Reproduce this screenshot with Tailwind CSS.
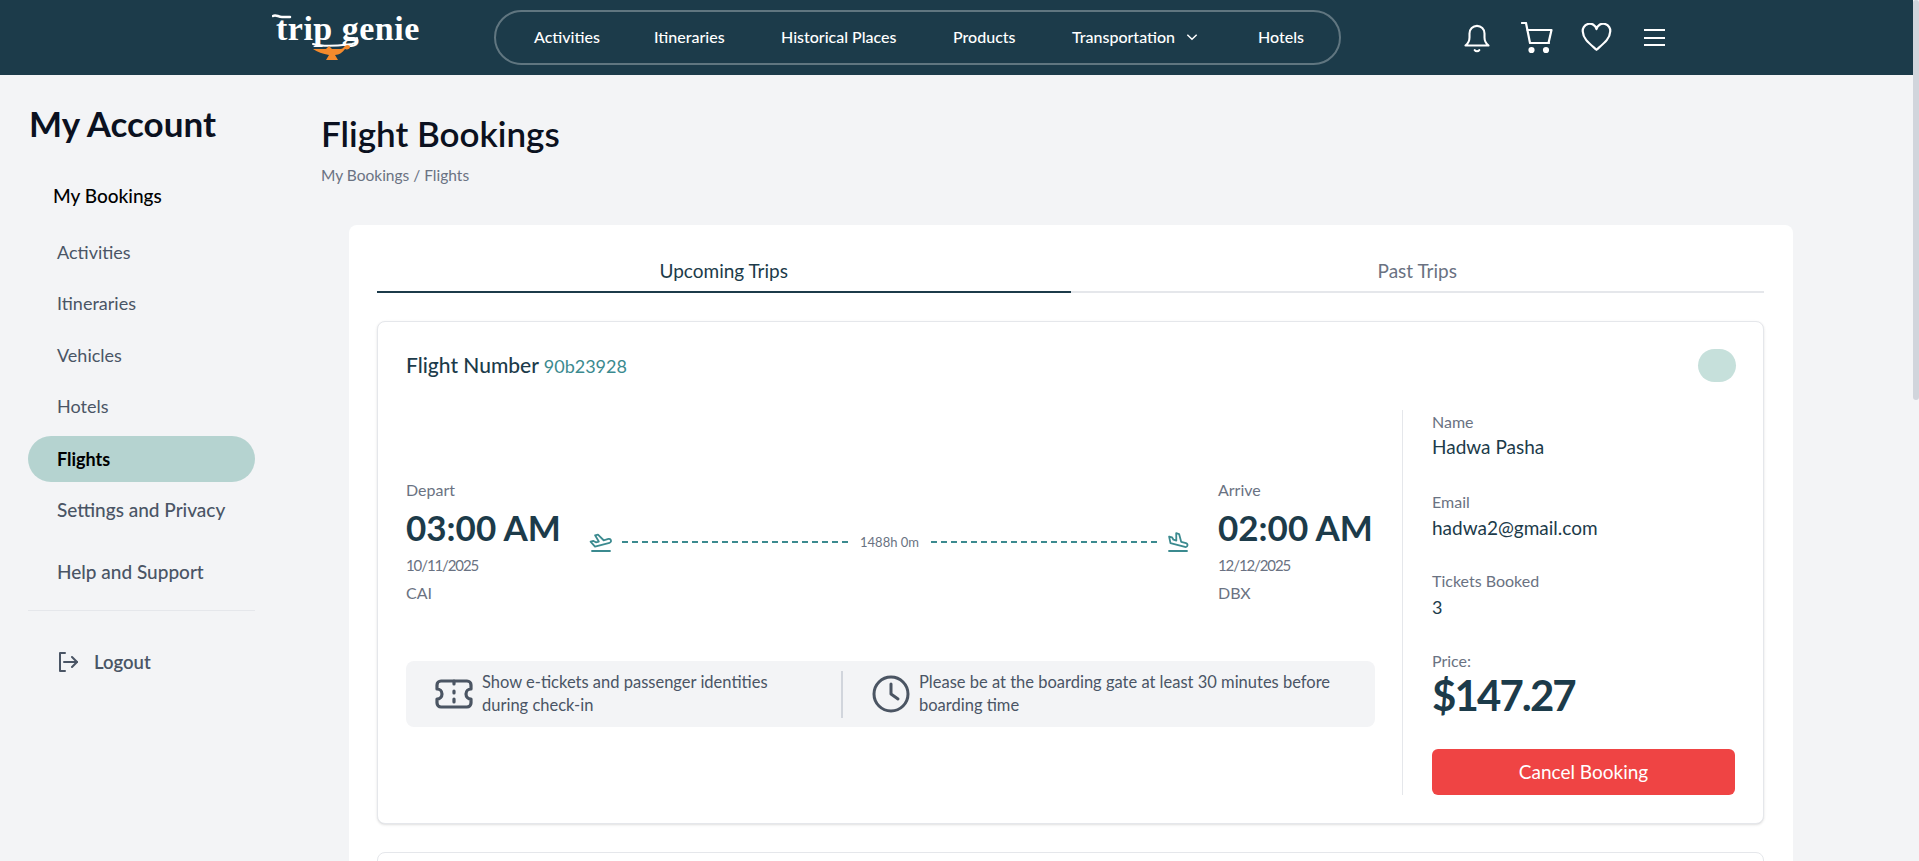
<!DOCTYPE html>
<html lang="en">
<head>
    <meta charset="UTF-8">
    <title>Flight Bookings</title>
    <script src="https://cdn.jsdelivr.net/npm/@tailwindcss/browser@4"></script>
</head>
<body>
    <div class="relative h-screen overflow-hidden bg-gray-100 font-['Lato',sans-serif] text-gray-600">
        <!-- navbar -->
        <header class="h-[75px] bg-[#1c3b4a] flex items-center text-white pr-[6px]">
            <div class="relative w-[222px] ml-[272px] h-[75px] shrink-0">
                <span class="absolute left-[4px] top-[9px] font-['Liberation_Serif',serif] font-bold text-[34px] leading-[40px] tracking-[0.5px] whitespace-nowrap">trip genie</span>
                <svg class="absolute left-0 top-[10px]" width="150" height="54" viewBox="0 0 150 54" fill="none">
                    <path d="M1 6c3-2 5 1 9 1h8" stroke="#fff" stroke-width="2.5" stroke-linecap="round"/>
                    <path d="M41 34c14 4 30 1 39 0c5-1 6-3 5-6" stroke="#fff" stroke-width="2" stroke-linecap="round"/>
                    <path d="M41 39h13l3-3l3 3h8c3 0 3-1 5-3c2-2 5-1 5 1c0 2-3 3-5 2c-2 3-6 6-10 6l3 5h-12l3-5c-6-1-12-3-16-6z" fill="#f58a2c"/>
                </svg>
            </div>
            <nav class="w-[847px] h-[55px] rounded-full border-2 border-white/30 flex items-center pl-[38px] pb-[2px] text-[16px] font-medium whitespace-nowrap">
                <a class="w-[120px]">Activities</a>
                <a class="w-[127px]">Itineraries</a>
                <a class="w-[172px]">Historical Places</a>
                <a class="w-[119px]">Products</a>
                <a class="w-[186px] flex items-center gap-[10px]">Transportation
                    <svg width="14" height="14" viewBox="0 0 24 24" fill="none" stroke="currentColor" stroke-width="2.5"><path d="M4 8l8 8l8-8"/></svg>
                </a>
                <a>Hotels</a>
            </nav>
            <div class="flex items-center ml-[122px]">
                <svg class="w-[28px] h-[30px]" viewBox="0 0 24 26" fill="none" stroke="currentColor" stroke-width="1.8" stroke-linejoin="round" stroke-linecap="round">
                    <path d="M2 19.5c2.5-2 3.5-4 3.5-7V9a6.5 6.5 0 0 1 13 0v3.5c0 3 1 5 3.5 7z"/>
                    <path d="M10 23.5a2.5 2.5 0 0 0 4 0"/>
                </svg>
                <svg class="w-[32px] h-[32px] ml-[30px]" viewBox="0 0 32 32" fill="none" stroke="currentColor" stroke-width="2.2" stroke-linecap="round" stroke-linejoin="round">
                    <path d="M1 1h4l4 20h19"/>
                    <path d="M6.5 8h24l-3 13"/>
                    <circle cx="10.5" cy="28" r="2" fill="currentColor"/>
                    <circle cx="25" cy="28" r="2" fill="currentColor"/>
                </svg>
                <svg class="w-[31px] h-[29px] ml-[28px]" viewBox="0 0 24 22" fill="none" stroke="currentColor" stroke-width="1.7" stroke-linejoin="round">
                    <path d="M12 20.5C7 16 1.500 12 1.500 7A5.200 5.200 0 0 1 12 4.500A5.200 5.200 0 0 1 22.500 7C22.500 12 17 16 12 20.500z"/>
                </svg>
                <div class="ml-[32px] w-[21px] flex flex-col gap-[5.500px]">
                    <div class="h-[2px] bg-white"></div>
                    <div class="h-[2px] bg-white"></div>
                    <div class="h-[2px] bg-white"></div>
                </div>
            </div>
        </header>

        <div class="flex">
            <!-- sidebar -->
            <aside class="w-[321px] shrink-0 pl-[28px] pt-[24px]">
                <h2 class="pl-[1px] text-[35px] leading-[48px] font-bold text-[#0b1120]">My Account</h2>
                <div class="w-[227px] mt-[35px]">
                    <p class="pl-[25px] text-[19px] leading-[28px] font-medium text-black h-[44px]">My Bookings</p>
                    <ul class="text-[18px] leading-[28px]">
                        <li class="h-[51.500px] pl-[29px] flex items-center">Activities</li>
                        <li class="h-[51.500px] pl-[29px] flex items-center">Itineraries</li>
                        <li class="h-[51.500px] pl-[29px] flex items-center">Vehicles</li>
                        <li class="h-[51.500px] pl-[29px] flex items-center">Hotels</li>
                        <li class="h-[46px] mt-[4px] pl-[29px] flex items-center rounded-full bg-[#b5d3d0] text-black font-bold">Flights</li>
                    </ul>
                    <p class="mt-[2px] h-[52px] pl-[29px] flex items-center text-[19px] font-medium">Settings and Privacy</p>
                    <p class="mt-[10px] h-[52px] pl-[29px] flex items-center text-[19px] font-medium">Help and Support</p>
                    <div class="mt-[12px] border-t border-gray-200"></div>
                    <div class="flex items-center gap-[16px] mt-[37px] pl-[30px] text-[18.500px] leading-[28px] font-semibold">
                        <svg class="w-[20px] h-[20px]" viewBox="0 0 20 20" fill="none" stroke="currentColor" stroke-width="2" stroke-linecap="round" stroke-linejoin="round">
                            <path d="M7 1H2v18h5"/><path d="M6 10h13"/><path d="M14 5l5 5l-5 5"/>
                        </svg>
                        Logout
                    </div>
                </div>
            </aside>

            <!-- content -->
            <main class="flex-1 pt-[38px]">
                <h1 class="text-[35px] leading-[40px] font-semibold text-[#0b1120]">Flight Bookings</h1>
                <p class="mt-[11px] text-[15.500px] leading-[22px] text-gray-500">My Bookings / Flights</p>

                <section class="mt-[39px] ml-[28px] w-[1444px] rounded-lg bg-white pl-[28px] pr-[29px] pt-[32px]">
                    <div class="grid grid-cols-2 text-[19px] leading-[28px] h-[36px]">
                        <div class="text-center border-b-2 border-[#1c3b4a] text-[#1c3b4a]">Upcoming Trips</div>
                        <div class="text-center border-b-2 border-gray-200 text-gray-500">Past Trips</div>
                    </div>

                    <article class="mt-[28px] h-[503px] rounded-lg border border-gray-200 bg-white shadow-sm pl-[28px] pr-[27px]">
                        <div class="h-[88px] flex items-start justify-between pt-[27px]">
                            <p class="text-[21px] leading-[32px] font-medium text-[#1c3b4a]">Flight Number <span class="text-[18px] font-normal text-[#3b8a8f]">90b23928</span></p>
                            <div class="w-[38px] h-[33px] rounded-full bg-[#c6e0db]"></div>
                        </div>
                        <div class="grid grid-cols-[969px_1fr] h-[385px]">
                            <div class="pt-[68px]">
                                <div class="flex items-start">
                                    <div class="w-[183px] shrink-0">
                                        <p class="text-[16px] leading-[24px] text-gray-500">Depart</p>
                                        <p class="text-[35px] leading-[46px] mt-[2px] font-bold text-[#1c3b4a] whitespace-nowrap">03:00 AM</p>
                                        <p class="text-[15px] leading-[24px] mt-[3px] tracking-[-1.1px] text-gray-500">10/11/2025</p>
                                        <p class="text-[16px] leading-[24px] mt-[4px] text-gray-500">CAI</p>
                                    </div>
                                    <div class="w-[601px] shrink-0 flex items-center gap-[9px] mt-[52px] text-[#3b8a8f]">
                                        <svg class="w-[24px] h-[24px] shrink-0" viewBox="0 0 24 24" fill="none" stroke="currentColor" stroke-width="1.8" stroke-linecap="round" stroke-linejoin="round">
                                            <path d="M14.639 10.258l4.83 -1.294a2 2 0 1 1 1.035 3.863l-14.489 3.883l-4.45 -5.02l2.897 -.776l2.45 1.414l2.897 -.776l-3.743 -6.244l2.898 -.777l5.675 5.727z"/>
                                            <path d="M3 21h18"/>
                                        </svg>
                                        <div class="flex-1 border-t-2 border-dashed border-[#3b8a8f]"></div>
                                        <span class="text-[13px] leading-[20px] text-gray-500 px-[3px]">1488h 0m</span>
                                        <div class="flex-1 border-t-2 border-dashed border-[#3b8a8f]"></div>
                                        <svg class="w-[24px] h-[24px] shrink-0" viewBox="0 0 24 24" fill="none" stroke="currentColor" stroke-width="1.8" stroke-linecap="round" stroke-linejoin="round">
                                            <path d="M15.157 11.81l4.83 1.295a2 2 0 1 1 -1.036 3.863l-14.489 -3.882l-1.345 -6.572l2.898 .776l1.414 2.45l2.898 .776l-.12 -7.279l2.898 .777l2.052 7.797z"/>
                                            <path d="M3 21h18"/>
                                        </svg>
                                    </div>
                                    <div class="ml-[28px]">
                                        <p class="text-[16px] leading-[24px] text-gray-500">Arrive</p>
                                        <p class="text-[35px] leading-[46px] mt-[2px] font-bold text-[#1c3b4a] whitespace-nowrap">02:00 AM</p>
                                        <p class="text-[15px] leading-[24px] mt-[3px] tracking-[-1.1px] text-gray-500">12/12/2025</p>
                                        <p class="text-[16px] leading-[24px] mt-[4px] text-gray-500">DBX</p>
                                    </div>
                                </div>
                                <div class="mt-[56px] h-[66px] rounded-lg bg-gray-100 flex items-center text-[16.500px] leading-[23px] text-gray-600">
                                    <svg class="ml-[29px] w-[38px] h-[30px] shrink-0" viewBox="0 0 38 30" fill="none" stroke="#4b5563" stroke-width="3.200" stroke-linecap="round" stroke-linejoin="round">
                                        <path d="M6 2h26a4 4 0 0 1 4 4v4a5 5 0 0 0 0 10v4a4 4 0 0 1-4 4H6a4 4 0 0 1-4-4v-4a5 5 0 0 0 0-10V6a4 4 0 0 1 4-4z"/>
                                        <path d="M19 2v3M19 12v2M19 20v3"/>
                                    </svg>
                                    <p class="ml-[9px] w-[359px] shrink-0">Show e-tickets and passenger identities<br>during check-in</p>
                                    <div class="w-[2px] h-[47px] bg-gray-300 shrink-0"></div>
                                    <svg class="ml-[29px] w-[38px] h-[38px] shrink-0" viewBox="0 0 38 38" fill="none" stroke="#4b5563" stroke-width="3" stroke-linecap="round" stroke-linejoin="round">
                                        <circle cx="19" cy="19" r="17"/><path d="M19 9v10l7 5"/>
                                    </svg>
                                    <p class="ml-[9px] whitespace-nowrap">Please be at the boarding gate at least 30 minutes before<br>boarding time</p>
                                </div>
                            </div>
                            <div class="ml-[27px] border-l border-gray-200 pl-[29px] flex flex-col">
                                <p class="text-[16px] leading-[24px] text-gray-500">Name</p>
                                <p class="text-[19px] leading-[26px] text-[#1c3b4a]">Hadwa Pasha</p>
                                <p class="mt-[30px] text-[16px] leading-[24px] text-gray-500">Email</p>
                                <p class="mt-[1px] text-[19px] leading-[26px] text-[#1c3b4a]">hadwa2@gmail.com</p>
                                <p class="mt-[28px] text-[16px] leading-[24px] text-gray-500">Tickets Booked</p>
                                <p class="mt-[1px] text-[18px] leading-[26px] text-[#1c3b4a]">3</p>
                                <p class="mt-[29px] text-[16px] leading-[24px] text-gray-500">Price:</p>
                                <p class="text-[42px] leading-[44px] tracking-[-1.9px] font-bold text-[#1c3b4a]">$147.27</p>
                                <button class="mt-auto h-[46px] w-[303px] rounded-md bg-[#ef4444] text-white text-[19px]">Cancel Booking</button>
                            </div>
                        </div>
                    </article>

                    <div class="mt-[28px] h-[40px] rounded-t-lg border border-gray-200"></div>
                </section>
            </main>
        </div>

        <!-- page scrollbar -->
        <div class="absolute top-0 right-0 w-[6px] h-full bg-gray-100">
            <div class="h-[400px] rounded-full bg-gray-300"></div>
        </div>
    </div>
</body>
</html>
